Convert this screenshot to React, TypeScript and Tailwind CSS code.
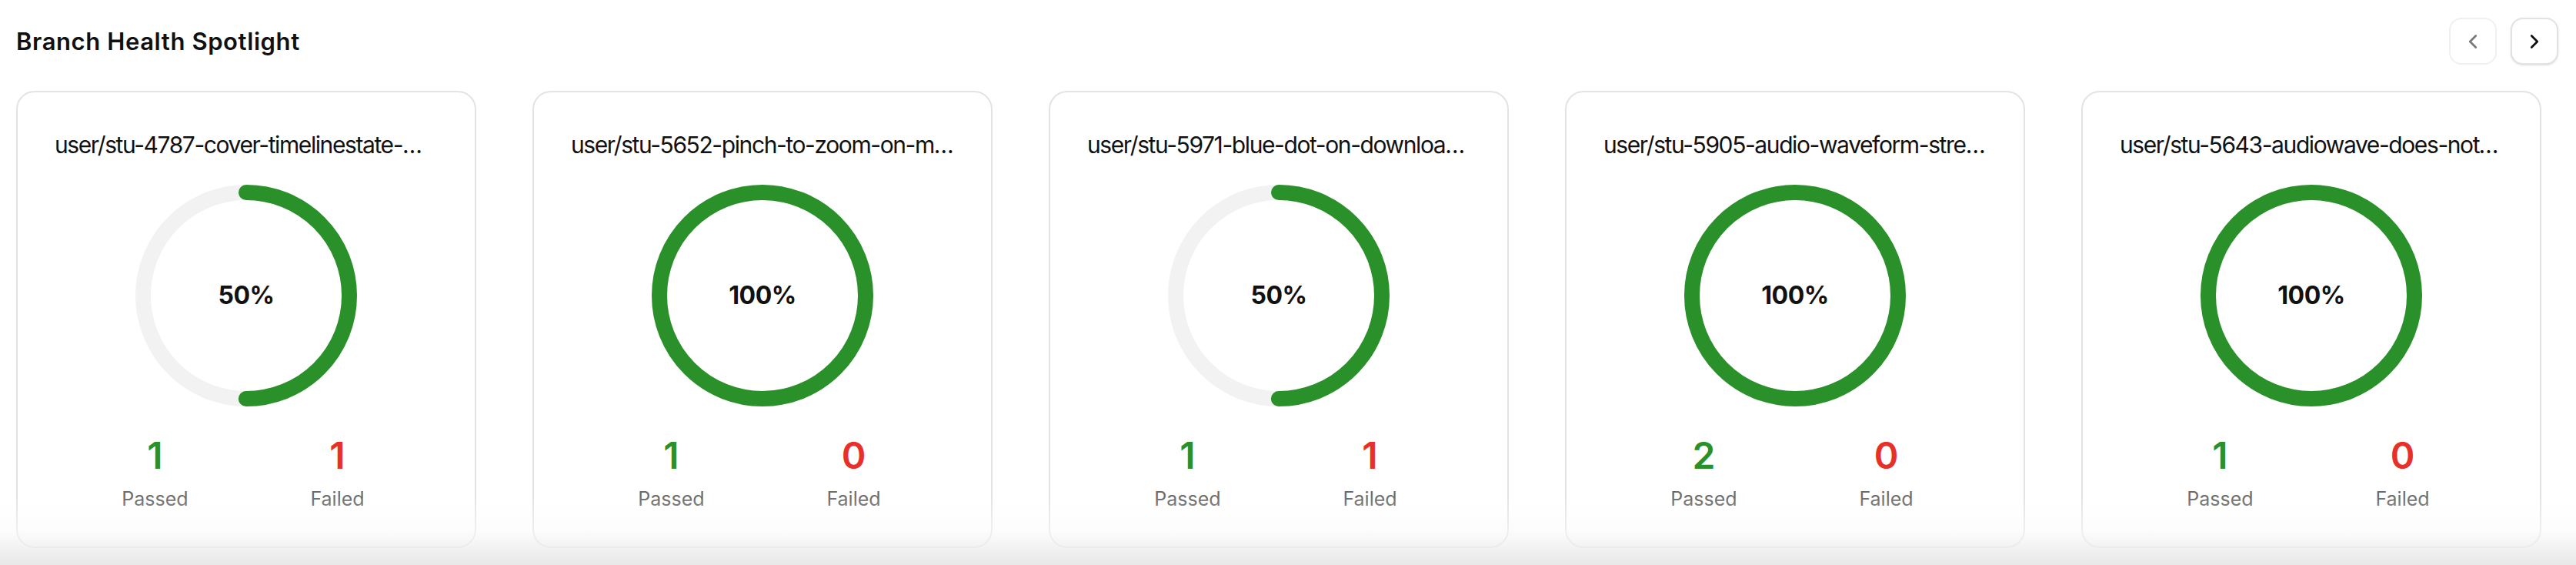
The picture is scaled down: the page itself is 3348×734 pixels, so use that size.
import { ChevronLeft, ChevronRight } from "lucide-react";

type Branch = {
  name: string;
  passed: number;
  failed: number;
};

const branches: Branch[] = [
  { name: "user/stu-4787-cover-timelinestate-with-unit-tests", passed: 1, failed: 1 },
  { name: "user/stu-5652-pinch-to-zoom-on-mobile-timeline", passed: 1, failed: 0 },
  { name: "user/stu-5971-blue-dot-on-download-button", passed: 1, failed: 1 },
  { name: "user/stu-5905-audio-waveform-streaming", passed: 2, failed: 0 },
  { name: "user/stu-5643-audiowave-does-not-render", passed: 1, failed: 0 },
];

function HealthRing({ percent }: { percent: number }) {
  const r = 134;
  const c = 2 * Math.PI * r;
  return (
    <div className="relative h-[288px] w-[288px]">
      <svg width="288" height="288" viewBox="0 0 288 288" className="-rotate-90">
        <circle cx="144" cy="144" r={r} fill="none" stroke="#f2f2f2" strokeWidth="20" />
        <circle
          cx="144"
          cy="144"
          r={r}
          fill="none"
          stroke="#2a912a"
          strokeWidth="20"
          strokeLinecap="round"
          strokeDasharray={`${(c * percent) / 100} ${c}`}
        />
      </svg>
      <div className="absolute inset-0 flex items-center justify-center text-[32px] font-bold tracking-[-0.5px] text-[#111]">
        {percent}%
      </div>
    </div>
  );
}

function BranchCard({ branch }: { branch: Branch }) {
  const total = branch.passed + branch.failed;
  const percent = total ? Math.round((branch.passed / total) * 100) : 0;
  return (
    <div className="flex w-[598px] shrink-0 flex-col items-center rounded-[24px] border-2 border-[#e3e3e3] bg-white px-[48px] pb-[46px] pt-[48px]">
      <div className="w-full truncate text-[30px] leading-[40px] tracking-[-1.4px] text-[#111]">
        {branch.name}
      </div>
      <div className="mt-8">
        <HealthRing percent={percent} />
      </div>
      <div className="mt-[40px] grid w-[474px] grid-cols-2">
        <div className="flex flex-col items-center">
          <span className="text-[48px] font-semibold leading-[48px] text-[#2a912a]">{branch.passed}</span>
          <span className="mt-4 text-[25px] leading-[32px] text-[#6b6b6b]">Passed</span>
        </div>
        <div className="flex flex-col items-center">
          <span className="text-[48px] font-semibold leading-[48px] text-[#e8302a]">{branch.failed}</span>
          <span className="mt-4 text-[25px] leading-[32px] text-[#6b6b6b]">Failed</span>
        </div>
      </div>
    </div>
  );
}

export default function App() {
  return (
    <div className="relative h-[734px] w-full overflow-hidden bg-white font-['Inter',sans-serif]">
      <header className="flex items-center justify-between pl-[21px] pr-[23px] pt-[23px]">
        <h2 className="text-[31px] font-semibold leading-[40px] tracking-[0.6px] text-[#111]">
          Branch Health Spotlight
        </h2>
        <div className="flex items-center gap-[18px]">
          <button className="flex h-[61px] w-[62px] items-center justify-center rounded-[16px] border-2 border-[#f0f0f0] bg-white text-[#7a7a7a]">
            <ChevronLeft size={30} strokeWidth={2.2} />
          </button>
          <button className="flex h-[61px] w-[62px] items-center justify-center rounded-[16px] border-2 border-[#e2e2e2] bg-white text-[#111] shadow-sm">
            <ChevronRight size={30} strokeWidth={2.2} />
          </button>
        </div>
      </header>
      <div className="mt-[34px] flex gap-[73px] pl-[21px]">
        {branches.map((b) => (
          <BranchCard key={b.name} branch={b} />
        ))}
      </div>
      <div className="pointer-events-none absolute inset-x-0 bottom-0 h-[90px] bg-linear-to-b from-white/0 via-[#fafafa]/50 to-[#e8e8e8]" />
    </div>
  );
}
